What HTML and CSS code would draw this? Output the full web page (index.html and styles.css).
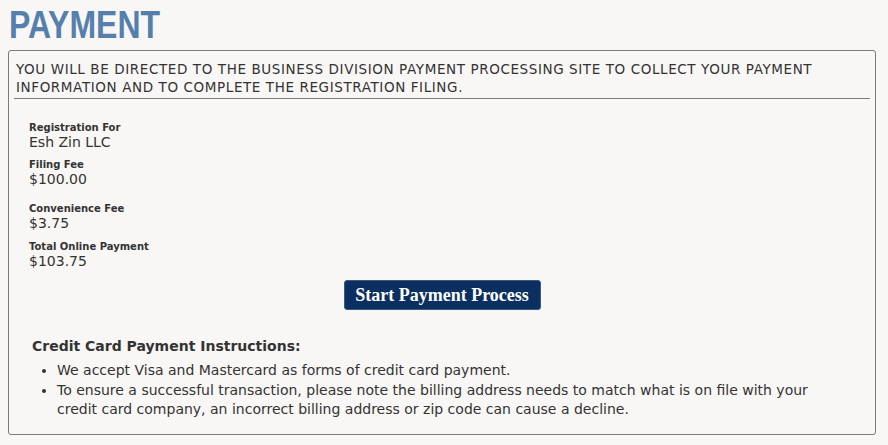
FILE: index.html
```html
<!DOCTYPE html>
<html lang="en">

<head>
    <meta charset="UTF-8" />
    <title>Payment</title>
    <link rel="stylesheet" href="styles.css">
</head>

<body>
    <h1 class="page-title">PAYMENT</h1>
    <div class="panel">
        <div class="panel-head">
            YOU WILL BE DIRECTED TO THE BUSINESS DIVISION PAYMENT PROCESSING SITE TO COLLECT YOUR PAYMENT INFORMATION AND TO COMPLETE THE REGISTRATION FILING.
        </div>
        <div class="details">
            <div class="field">
                <div class="field-label">Registration For</div>
                <div class="field-value">Esh Zin LLC</div>
            </div>
            <div class="field">
                <div class="field-label">Filing Fee</div>
                <div class="field-value">$100.00</div>
            </div>
            <div class="field field-gap">
                <div class="field-label">Convenience Fee</div>
                <div class="field-value">$3.75</div>
            </div>
            <div class="field">
                <div class="field-label">Total Online Payment</div>
                <div class="field-value">$103.75</div>
            </div>
        </div>
        <div class="button-row">
            <button type="button" class="pay-btn">Start Payment Process</button>
        </div>
        <div class="instructions">
            <h3>Credit Card Payment Instructions:</h3>
            <ul>
                <li>We accept Visa and Mastercard as forms of credit card payment.</li>
                <li>To ensure a successful transaction, please note the billing address needs to match what is on file with your credit card company, an incorrect billing address or zip code can cause a decline.</li>
            </ul>
        </div>
    </div>
</body>

</html>
```

FILE: styles.css
```css
body {
    font-family: "DejaVu Sans", Verdana, sans-serif;
    background-color: #f8f7f5;
    color: #333;
    margin: 0;
    padding: 0 12px 0 8px;
}

.page-title {
    display: inline-block;
    font-family: "Liberation Sans", Arial, sans-serif;
    font-weight: bold;
    font-size: 39px;
    line-height: 40px;
    color: #5680ac;
    margin: 5px 0 5px 1px;
    transform: scaleX(0.82);
    transform-origin: left center;
}

.panel {
    border: 1px solid #7a7a7a;
    border-radius: 3px;
    padding: 0 5px 14px 5px;
}

.panel-head {
    font-size: 13.5px;
    line-height: 18px;
    padding: 9px 0 2px 2px;
    border-bottom: 1px solid #7a7a7a;
    letter-spacing: 0.6px;
}

.details {
    padding: 22px 0 0 15px;
}

.field {
    margin-bottom: 8px;
}

.field-gap {
    margin: 15px 0 9px 0;
}

.field-label {
    font-size: 10px;
    font-weight: bold;
    line-height: 13px;
}

.field-value {
    font-size: 14px;
    line-height: 16px;
}

.button-row {
    display: flex;
    justify-content: center;
    margin-top: 11px;
}

.pay-btn {
    font-family: "Liberation Serif", serif;
    font-weight: bold;
    font-size: 18px;
    color: #fff;
    background-color: #0b2f60;
    border: 1px solid #3a5a80;
    border-radius: 3px;
    width: 197px;
    height: 30px;
    padding: 0;
}

.instructions {
    padding: 28px 30px 0 18px;
}

.instructions h3 {
    font-size: 14px;
    margin: 0 0 7px 0;
}

.instructions ul {
    margin: 0;
    padding-left: 25px;
    font-size: 14px;
    line-height: 19.5px;
}
```
